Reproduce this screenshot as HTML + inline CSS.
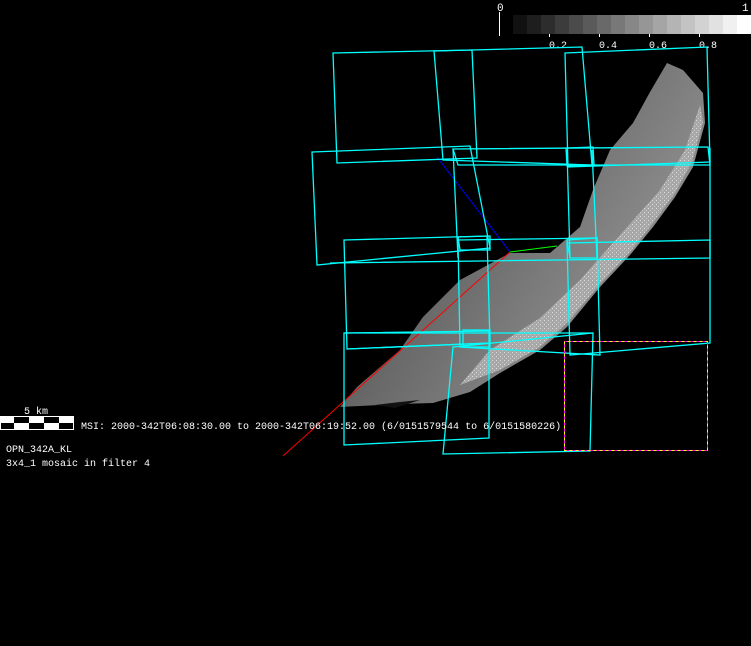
<!DOCTYPE html>
<html><head><meta charset="utf-8"><style>
html,body{margin:0;padding:0;background:#000;width:751px;height:646px;overflow:hidden}
svg{display:block}
text{font-family:"Liberation Mono","DejaVu Sans Mono",monospace;fill:#fff;font-size:10px}
</style></head><body>
<svg width="751" height="646" viewBox="0 0 751 646" xmlns="http://www.w3.org/2000/svg">
<defs>
<pattern id="dots" width="4" height="4" patternUnits="userSpaceOnUse">
<rect x="0" y="0" width="1" height="1" fill="#fff"/><rect x="2" y="2" width="1" height="1" fill="#ddd"/>
</pattern>
<linearGradient id="g1" x1="0" y1="0" x2="1" y2="0.6">
<stop offset="0" stop-color="#333"/><stop offset="0.5" stop-color="#6a6a6a"/><stop offset="1" stop-color="#999"/>
</linearGradient>
</defs>
<g>
<rect x="513" y="15" width="15" height="19" fill="#111"/>
<rect x="527" y="15" width="15" height="19" fill="#1e1e1e"/>
<rect x="541" y="15" width="15" height="19" fill="#2d2d2d"/>
<rect x="555" y="15" width="15" height="19" fill="#3c3c3c"/>
<rect x="569" y="15" width="15" height="19" fill="#4b4b4b"/>
<rect x="583" y="15" width="15" height="19" fill="#5a5a5a"/>
<rect x="597" y="15" width="15" height="19" fill="#696969"/>
<rect x="611" y="15" width="15" height="19" fill="#787878"/>
<rect x="625" y="15" width="15" height="19" fill="#878787"/>
<rect x="639" y="15" width="15" height="19" fill="#969696"/>
<rect x="653" y="15" width="15" height="19" fill="#a5a5a5"/>
<rect x="667" y="15" width="15" height="19" fill="#b4b4b4"/>
<rect x="681" y="15" width="15" height="19" fill="#c3c3c3"/>
<rect x="695" y="15" width="15" height="19" fill="#d2d2d2"/>
<rect x="709" y="15" width="15" height="19" fill="#e1e1e1"/>
<rect x="723" y="15" width="14" height="19" fill="#f0f0f0"/>
<rect x="737" y="15" width="14" height="19" fill="#fff"/>
<rect x="499" y="12" width="1" height="24" fill="#fff"/>
<rect x="549" y="34" width="1" height="3" fill="#fff"/>
<rect x="599" y="34" width="1" height="3" fill="#fff"/>
<rect x="649" y="34" width="1" height="3" fill="#fff"/>
<rect x="699" y="34" width="1" height="3" fill="#fff"/>
<text x="497" y="11" style="font-size:11px">0</text><text x="742" y="11" style="font-size:11px">1</text>
<text x="549" y="48">0.2</text><text x="599" y="48">0.4</text><text x="649" y="48">0.6</text><text x="699" y="48">0.8</text>
</g>
<polygon points="340,407 400,404 433,403 470,392 500,373 540,350 567,327 600,287 630,255 653,227 675,197 693,167 705,123 703,93 683,70 667,63 650,92 633,123 610,150 593,190 580,227 550,253 510,253 460,280 423,317 400,350 357,387" fill="url(#g1)"/>
<polygon points="460,385 500,370 540,347 567,323 600,284 630,252 653,223 675,193 692,162 703,122 700,105 685,150 660,190 620,235 580,280 540,318 490,350" fill="#a8a8a8"/>
<polygon points="460,385 500,370 540,347 567,323 600,284 630,252 653,223 675,193 692,162 703,122 700,105 685,150 660,190 620,235 580,280 540,318 490,350" fill="url(#dots)" opacity="0.6"/>
<polygon points="375,405 400,402 420,400 395,408" fill="#111"/>
<g fill="none" stroke-width="1">
<line x1="283" y1="456" x2="510" y2="252" stroke="#f00"/>
<line x1="437" y1="157" x2="510" y2="252" stroke="#00f"/>
<line x1="510" y1="252" x2="557" y2="246" stroke="#0f0"/>
</g>
<g fill="none" stroke="#0ff" stroke-width="1.3">
<polygon points="333,53 472,50 477,158 337,163"/>
<polygon points="434,51 582,47 592,165 443,160"/>
<polygon points="565,53 707,47 710,162 568,167"/>
<polygon points="312,152 470,146 490,248 317,265"/>
<polygon points="453,149 708,147 710,165 458,165"/>
<polyline points="453,149 458,258"/>
<polyline points="567,150 570,258"/>
<polyline points="592,150 597,258"/>
<polygon points="566,148 593,147 594,165 567,166"/>
<polyline points="330,263 710,258 710,148"/>
<polygon points="344,240 487,236 490,343 347,349"/>
<polygon points="458,240 597,238 600,355 460,347"/>
<polygon points="567,243 710,240 710,343 570,355"/>
<polygon points="567,240 597,238 597,258 570,258"/>
<polygon points="458,237 490,236 490,250 460,250"/>
<polygon points="344,333 344,445 489,438 489,331"/>
<polyline points="344,333 593,333"/>
<polyline points="347,349 490,343"/>
<polygon points="453,347 443,454 590,451 593,333"/>
<polygon points="463,330 490,330 490,347 463,347"/>
</g>
<rect x="564.5" y="341.5" width="143" height="109" fill="none" stroke="#ff0" stroke-width="1"/>
<rect x="564.5" y="341.5" width="143" height="109" fill="none" stroke="#f0f" stroke-width="1" stroke-dasharray="3,3"/>
<rect x="0" y="416" width="74" height="14" fill="#fff"/>
<rect x="14" y="417" width="15" height="6" fill="#000"/>
<rect x="44" y="417" width="15" height="6" fill="#000"/>
<rect x="1" y="423" width="13" height="6" fill="#000"/>
<rect x="29" y="423" width="15" height="6" fill="#000"/>
<rect x="59" y="423" width="14" height="6" fill="#000"/>
<text x="24" y="414">5 km</text>
<text x="81" y="429">MSI:  2000-342T06:08:30.00 to 2000-342T06:19:52.00 (6/0151579544 to 6/0151580226)</text>
<text x="6" y="452">OPN_342A_KL</text>
<text x="6" y="466">3x4_1 mosaic in filter 4</text>
</svg>
</body></html>
